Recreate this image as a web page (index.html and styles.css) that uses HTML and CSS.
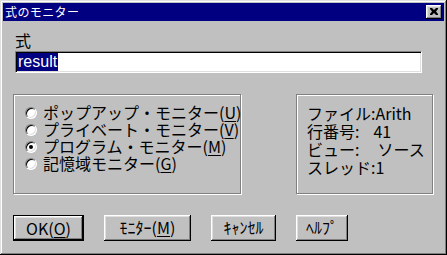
FILE: index.html
```html
<!DOCTYPE html>
<html lang="ja">
<head>
<meta charset="utf-8">
<title>式のモニター</title>
<link rel="stylesheet" href="styles.css">
</head>
<body>
<div class="win">
  <div class="titlebar">
    <span class="title">式のモニター</span>
    <span class="close"><svg width="8" height="7" viewBox="0 0 8 7"><path d="M0 0h2l2 2 2-2h2v1L6 3.5 8 6v1H6L4 5 2 7H0V6l2-2.5L0 1z" fill="#000"/></svg></span>
  </div>
  <div class="content">
    <div class="label">式</div>
    <div class="input"><span class="sel">result</span></div>
    <div class="groups">
      <div class="group left">
        <div class="row"><span class="radio"></span>ポップアップ・モニター(<u>U</u>)</div>
        <div class="row"><span class="radio"></span>プライベート・モニター(<u>V</u>)</div>
        <div class="row"><span class="radio on"></span>プログラム・モニター(<u>M</u>)</div>
        <div class="row"><span class="radio"></span>記憶域モニター(<u>G</u>)</div>
      </div>
      <div class="group right">
        <div class="line">ファイル:Arith</div>
        <div class="line"><span class="k">行番号:</span><span class="v1">41</span></div>
        <div class="line"><span class="k">ビュー:</span><span class="v2">ソース</span></div>
        <div class="line">スレッド:1</div>
      </div>
    </div>
    <div class="buttons">
      <div class="btn def w1">OK(<u>O</u>)</div>
      <div class="btn w2">ﾓﾆﾀｰ(<u>M</u>)</div>
      <div class="btn w3">ｷｬﾝｾﾙ</div>
      <div class="btn w4">ﾍﾙﾌﾟ</div>
    </div>
  </div>
</div>
</body>
</html>
```
FILE: styles.css
```css
* { box-sizing: border-box; }
html, body { margin: 0; padding: 0; background: #c0c0c0; }
body { font-family: "Noto Sans CJK JP", "Liberation Sans", sans-serif; color: #000; }
.win {
  width: 447px; height: 255px; padding: 3px;
  background: #c0c0c0;
  box-shadow: inset -1px -1px #000, inset 1px 1px #dfdfdf, inset -2px -2px #808080, inset 2px 2px #fff;
  display: flex; flex-direction: column;
}
.titlebar {
  height: 18px; background: #000080; color: #fff;
  display: flex; align-items: center; justify-content: space-between;
  padding: 0 2px 0 2px;
}
.title { font-size: 12px; line-height: 18px; letter-spacing: 0.4px; }
.close {
  width: 16px; height: 14px; background: #c0c0c0;
  box-shadow: inset -1px -1px #000, inset 1px 1px #fff, inset -2px -2px #808080, inset 2px 2px #dfdfdf;
  display: flex; align-items: center; justify-content: center; padding-bottom: 1px;
}
.content { padding: 10px 0 0 10px; display: flex; flex-direction: column; }
.label { font-size: 16px; line-height: 18px; height: 18px; margin-left: 2px; }
.input {
  margin: 2px 0 0 2px; width: 407px; height: 22px; background: #fff;
  border: 1px solid; border-color: #808080 #fff #fff #808080;
  box-shadow: inset 1px 1px #000, inset -1px -1px #dfdfdf;
  padding: 1px 0 0 1px; display: flex;
}
.sel { background: #000080; color: #fff; font-size: 16px; line-height: 18px; height: 18px; padding: 0 1px; font-family: "Liberation Sans", sans-serif; }
.groups { margin-top: 21px; display: flex; gap: 55px; height: 100px; }
.group {
  height: 100px; border: 1px solid #808080;
  box-shadow: inset 1px 1px #fff, 1px 1px #fff;
  font-size: 16px;
}
.left { width: 228px; padding: 9px 0 0 11px; }
.right { width: 137px; padding: 9px 0 0 10px; }
.row { height: 17px; line-height: 17px; display: flex; align-items: center; white-space: nowrap; }
.radio {
  width: 12px; height: 12px; border-radius: 50%; background: #fff; margin-right: 6px; flex: none;
  border: 1px solid; border-color: #808080 #fff #fff #808080;
  box-shadow: inset 1px 1px #000, inset -1px -1px #dfdfdf;
  display: flex; align-items: center; justify-content: center;
}
.radio.on::after { content: ""; width: 4px; height: 4px; border-radius: 50%; background: #000; }
.line { height: 18px; line-height: 18px; white-space: nowrap; }
.v1 { margin-left: 14px; }
.v2 { margin-left: 18px; }
.buttons { margin-top: 21px; display: flex; gap: 20px; }
.btn {
  height: 26px; font-size: 16px; line-height: 24px; text-align: center;
  box-shadow: inset -1px -1px #000, inset 1px 1px #fff, inset -2px -2px #808080, inset 2px 2px #dfdfdf;
}
.btn.def { border: 1px solid #000; }
.w1 { width: 71px; }
.w2 { width: 87px; }
.w3 { width: 65px; }
.w4 { width: 52px; }
u { text-decoration-thickness: 1px; text-underline-offset: 2px; }
```
